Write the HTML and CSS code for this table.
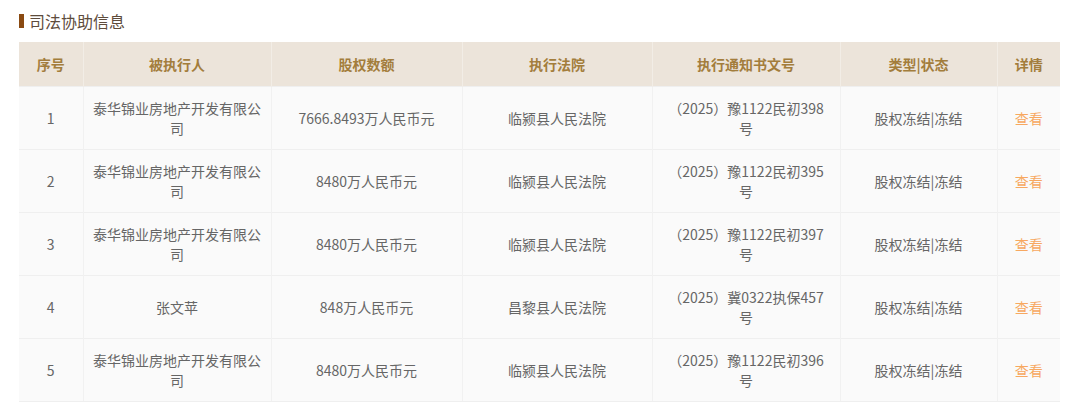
FILE: index.html
```html
<!DOCTYPE html>
<html lang="zh-CN">
<head>
<meta charset="utf-8">
<link rel="stylesheet" href="styles.css">
</head>
<body>
<div class="section">
  <h2 class="title"><span class="bar"></span>司法协助信息</h2>
  <table class="grid">
    <colgroup>
      <col class="c1"><col class="c2"><col class="c3"><col class="c4"><col class="c5"><col class="c6"><col class="c7">
    </colgroup>
    <thead>
      <tr><th>序号</th><th>被执行人</th><th>股权数额</th><th>执行法院</th><th>执行通知书文号</th><th>类型|状态</th><th>详情</th></tr>
    </thead>
    <tbody>
      <tr><td>1</td><td>泰华锦业房地产开发有限公司</td><td>7666.8493万人民币元</td><td>临颍县人民法院</td><td>（2025）豫1122民初398号</td><td>股权冻结|冻结</td><td><a class="link">查看</a></td></tr>
      <tr><td>2</td><td>泰华锦业房地产开发有限公司</td><td>8480万人民币元</td><td>临颍县人民法院</td><td>（2025）豫1122民初395号</td><td>股权冻结|冻结</td><td><a class="link">查看</a></td></tr>
      <tr><td>3</td><td>泰华锦业房地产开发有限公司</td><td>8480万人民币元</td><td>临颍县人民法院</td><td>（2025）豫1122民初397号</td><td>股权冻结|冻结</td><td><a class="link">查看</a></td></tr>
      <tr><td>4</td><td>张文苹</td><td>848万人民币元</td><td>昌黎县人民法院</td><td>（2025）冀0322执保457号</td><td>股权冻结|冻结</td><td><a class="link">查看</a></td></tr>
      <tr><td>5</td><td>泰华锦业房地产开发有限公司</td><td>8480万人民币元</td><td>临颍县人民法院</td><td>（2025）豫1122民初396号</td><td>股权冻结|冻结</td><td><a class="link">查看</a></td></tr>
    </tbody>
  </table>
</div>
</body>
</html>
```

FILE: styles.css
```css
html, body {
  margin: 0;
  padding: 0;
  background: #ffffff;
  font-family: "Noto Sans CJK SC", "Noto Sans", sans-serif;
}
.section {
  padding: 10px 20px 0 19px;
}
.title {
  display: flex;
  align-items: center;
  gap: 5px;
  margin: 0 0 10px 0;
  height: 22px;
  font-size: 16px;
  font-weight: 400;
  color: #5e4c3c;
}
.bar {
  width: 5px;
  height: 14px;
  background: #8a4a12;
}
.grid {
  width: 1041px;
  table-layout: fixed;
  border-collapse: collapse;
  font-size: 14px;
}
.c1 { width: 64px; }
.c2 { width: 188px; }
.c3 { width: 191px; }
.c4 { width: 190px; }
.c5 { width: 188px; }
.c6 { width: 157px; }
.c7 { width: 63px; }
.grid th {
  height: 44px;
  padding: 0 9px;
  background: #ece4da;
  color: #a37d3c;
  font-weight: 700;
  border-left: 1px solid #f2ede6;
  text-align: center;
  line-height: 20px;
}
.grid th:first-child { border-left: none; }
.grid td {
  height: 63px;
  padding: 0 9px;
  box-sizing: border-box;
  background: #fafafa;
  color: #666666;
  text-align: center;
  line-height: 20px;
  border-top: 1px solid #efefef;
  border-left: 1px solid #f1f1f1;
}
.grid td:first-child { border-left: none; }
.grid tbody tr:last-child td { border-bottom: 1px solid #efefef; }
.link {
  color: #f7a860;
  cursor: pointer;
}
```
